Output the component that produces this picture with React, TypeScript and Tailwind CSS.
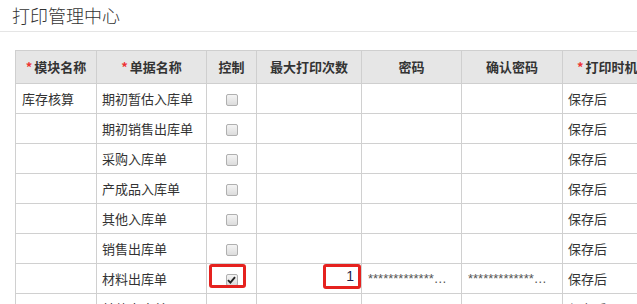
import React from "react";

const font = { fontFamily: '"Noto Sans CJK SC", "Liberation Sans", sans-serif' };

function Box({ checked }: { checked?: boolean }) {
  return (
    <span className="inline-flex h-[12px] w-[12px] items-center justify-center rounded-[2px] border border-[#b0b0b0] bg-gradient-to-b from-[#f4f4f4] to-[#dcdcdc] align-middle">
      {checked && (
        <svg width="9" height="8" viewBox="0 0 9 8">
          <path d="M1 4.2 L3.4 6.6 L8 1.2" fill="none" stroke="#222" strokeWidth="1.9" />
        </svg>
      )}
    </span>
  );
}

const rows = [
  "期初暂估入库单",
  "期初销售出库单",
  "采购入库单",
  "产成品入库单",
  "其他入库单",
  "销售出库单",
  "材料出库单",
  "其他出库单",
];

const Star = () => <span className="mr-[2px] text-[#e33]">*</span>;

export default function App() {
  const td = "h-[30px] border border-[#d0d0d0] px-[6px] text-[13px] text-[#333] align-middle";
  const th = "h-[33px] border border-[#cfcfcf] bg-[#e6e6e6] text-[13px] font-bold text-[#333] text-center align-middle";
  return (
    <div className="h-[304px] w-[637px] overflow-hidden bg-white" style={font}>
      <div className="flex h-[32px] items-center border-b border-[#e5e5e5] pl-[12px] text-[18px] font-light text-[#333]">
        打印管理中心
      </div>
      <div className="ml-[15px] mt-[18px]">
        <table className="w-[747px] table-fixed border-collapse">
          <colgroup>
            <col className="w-[81px]" />
            <col className="w-[110px]" />
            <col className="w-[50px]" />
            <col className="w-[105px]" />
            <col className="w-[100px]" />
            <col className="w-[101px]" />
            <col className="w-[200px]" />
          </colgroup>
          <thead>
            <tr>
              <th className={th}><Star />模块名称</th>
              <th className={th}><Star />单据名称</th>
              <th className={th}>控制</th>
              <th className={th}>最大打印次数</th>
              <th className={th}>密码</th>
              <th className={th}>确认密码</th>
              <th className={th + " !text-left pl-[14px]"}><Star />打印时机</th>
            </tr>
          </thead>
          <tbody>
            {rows.map((name, i) => {
              const sel = i === 6;
              return (
                <tr key={name}>
                  <td className={td}>{i === 0 ? "库存核算" : ""}</td>
                  <td className={td + " !px-[5px]"}>{name}</td>
                  <td className={td + " relative text-center !px-0"}>
                    <Box checked={sel} />
                    {sel && (
                      <span className="absolute left-[2px] top-[0px] h-[24px] w-[37px] rounded-[3px] border-[3px] border-[#e5221f]" />
                    )}
                  </td>
                  <td className={td + " relative !px-0"}>
                    {sel && (
                      <span className="absolute right-0 top-[0px] flex h-[25px] w-[38px] items-center justify-end rounded-[3px] border-[3px] border-[#e5221f] bg-white pr-[4px] text-[14px] text-[#1c1c4a]" style={{ fontFamily: '"Liberation Sans", sans-serif' }}>
                        1
                      </span>
                    )}
                  </td>
                  <td className={td}>
                    {sel && (
                      <div className="w-[82px] truncate text-[13px] text-[#555]" style={{ fontFamily: '"Liberation Sans", sans-serif' }}>
                        ************************
                      </div>
                    )}
                  </td>
                  <td className={td}>
                    {sel && (
                      <div className="w-[82px] truncate text-[13px] text-[#555]" style={{ fontFamily: '"Liberation Sans", sans-serif' }}>
                        ************************
                      </div>
                    )}
                  </td>
                  <td className={td + " !px-[5px]"}>保存后</td>
                </tr>
              );
            })}
          </tbody>
        </table>
      </div>
    </div>
  );
}
